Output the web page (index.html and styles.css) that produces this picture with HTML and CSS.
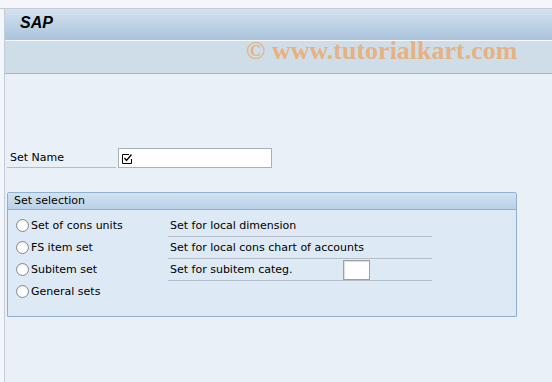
FILE: index.html
```html
<!DOCTYPE html>
<html>
<head>
<meta charset="utf-8">
<link rel="stylesheet" href="styles.css">
</head>
<body>
<div class="topstrip"></div>
<div class="frame">
  <div class="titlebar"><span class="title">SAP</span></div>
  <div class="toolbar"></div>
  <div class="watermark">© www.tutorialkart.com</div>
  <div class="content">
    <div class="field-row">
      <div class="label">Set Name</div>
      <div class="input wide">
        <svg width="11" height="11" viewBox="0 0 11 11" class="chk">
          <path d="M0.5 1.5 H7 M0.5 1.5 V10.5 H9.5 V6" fill="none" stroke="#000" stroke-width="1"/>
          <path d="M2.5 5 L4.5 7.5 L9.5 1.5" fill="none" stroke="#000" stroke-width="1.3"/>
        </svg>
      </div>
    </div>
    <div class="group">
      <div class="group-head">Set selection</div>
      <div class="group-body">
        <div class="row">
          <div class="radio-item"><span class="radio"></span>Set of cons units</div>
          <div class="desc">Set for local dimension</div>
        </div>
        <div class="row">
          <div class="radio-item"><span class="radio"></span>FS item set</div>
          <div class="desc">Set for local cons chart of accounts</div>
        </div>
        <div class="row">
          <div class="radio-item"><span class="radio"></span>Subitem set</div>
          <div class="desc">Set for subitem categ.<span class="input small"></span></div>
        </div>
        <div class="row">
          <div class="radio-item"><span class="radio"></span>General sets</div>
        </div>
      </div>
    </div>
  </div>
</div>
</body>
</html>
```
FILE: styles.css
```css
html, body {
  margin: 0;
  padding: 0;
}
body {
  width: 552px;
  height: 382px;
  overflow: hidden;
  background: #f3f6fa;
  font-family: Tahoma, "DejaVu Sans", "Liberation Sans", sans-serif;
  font-size: 11px;
  color: #000;
}
.topstrip {
  height: 8px;
  background: #f4f6f9;
  border-bottom: 1px solid #c3ccd6;
}
.frame {
  position: relative;
  margin-left: 4px;
  border-left: 1px solid #c2cdd9;
  background: #e9f0f8;
  height: 373px;
}
.titlebar {
  height: 31px;
  background: linear-gradient(#d4e3f0, #a9c3db);
  display: flex;
  align-items: center;
}
.title {
  font-family: "Liberation Sans", Arial, sans-serif;
  font-weight: bold;
  font-style: italic;
  font-size: 16px;
  margin-left: 15px;
  margin-top: -3px;
}
.toolbar {
  height: 32px;
  border-top: 1px solid #f4f8fb;
  border-bottom: 1px solid #a4b6c7;
  background: #cfdde9;
}
.watermark {
  position: absolute;
  left: 241px;
  top: 27px;
  font-family: "Liberation Serif", "Times New Roman", serif;
  font-weight: bold;
  font-size: 26px;
  color: #e7b27f;
  white-space: nowrap;
}
.content {
  padding-top: 74px;
  padding-left: 2px;
}
.field-row {
  display: flex;
  align-items: flex-start;
}
.label {
  width: 106px;
  height: 18px;
  padding-left: 3px;
  padding-top: 1px;
  border-bottom: 1px solid #b4bcc5;
  line-height: 18px;
}
.input {
  background: #fff;
  border: 1px solid #a9b1ba;
  box-sizing: border-box;
}
.input.wide {
  width: 154px;
  height: 20px;
  margin-left: 2px;
  display: flex;
  align-items: center;
  padding-left: 3px;
}
.chk {
  display: block;
}
.group {
  margin-top: 24px;
  width: 510px;
  border: 1px solid #8fb0d0;
  border-radius: 2px 2px 0 0;
  box-sizing: border-box;
  background: #dde9f4;
}
.group-head {
  height: 16px;
  line-height: 16px;
  padding-left: 6px;
  background: linear-gradient(#d2e2f0, #b9d1e8);
  border-bottom: 1px solid #8fb0d0;
}
.group-body {
  padding: 4px 0 14px 8px;
}
.row {
  display: flex;
  height: 22px;
  align-items: center;
}
.radio-item {
  width: 152px;
  display: flex;
  align-items: center;
}
.radio {
  width: 11px;
  height: 11px;
  border: 1px solid #8a8a8a;
  border-radius: 50%;
  background: radial-gradient(circle at 50% 60%, #fff 40%, #e6e6e6 100%);
  margin-right: 2px;
  flex: none;
}
.desc {
  width: 262px;
  height: 21px;
  border-bottom: 1px solid #b4bcc5;
  padding-left: 2px;
  display: flex;
  align-items: center;
  position: relative;
  top: 1px;
}
.input.small {
  width: 27px;
  height: 20px;
  margin-left: auto;
  margin-right: 62px;
  border-color: #a0a0a0;
  box-shadow: inset 1px 1px 1px #ddd;
}
```
